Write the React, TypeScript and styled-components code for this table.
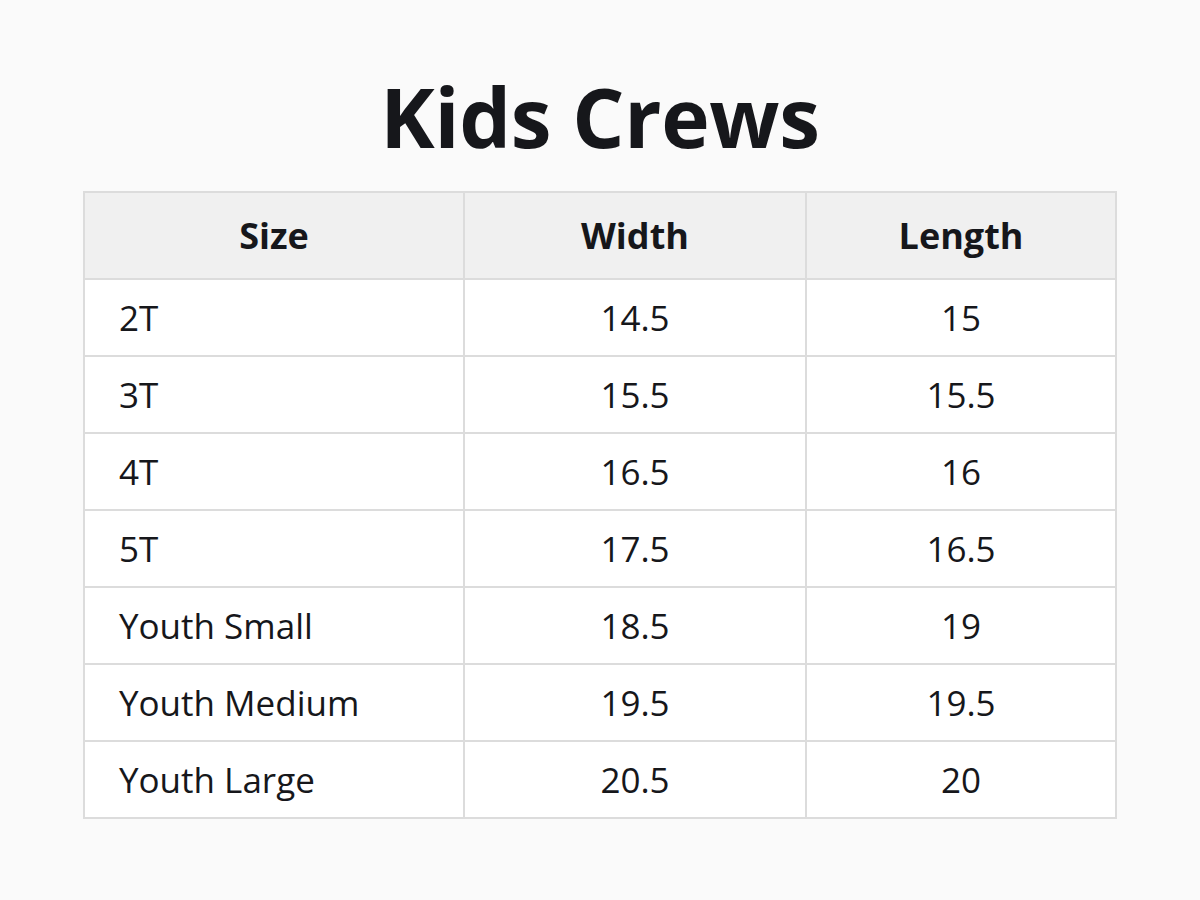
import React from 'react';
import styled, { createGlobalStyle } from 'styled-components';

const GlobalStyle = createGlobalStyle`
  body {
    margin: 0;
    background: #fafafa;
    font-family: 'Open Sans', 'Noto Sans', sans-serif;
    color: #16171b;
  }
`;

const Page = styled.div`
  width: 1200px;
  height: 900px;
  display: flex;
  flex-direction: column;
  align-items: center;
`;

const Title = styled.h1`
  margin: 72px 0 0;
  height: 119px;
  font-size: 82px;
  line-height: 88px;
  font-weight: 700;
  letter-spacing: -0.3px;
  color: #16171b;
`;

const Table = styled.table`
  width: 1032px;
  border-collapse: collapse;
  table-layout: fixed;
  background: #ffffff;
`;

const HeadCell = styled.th`
  height: 85px;
  padding: 0;
  background: #f0f0f0;
  border: 2px solid #dcdcdc;
  font-size: 36px;
  font-weight: 700;
  text-align: center;
`;

type CellProps = { $first?: boolean };

const Cell = styled.td<CellProps>`
  height: 75px;
  padding: 0 0 0 ${(p) => (p.$first ? '34px' : '0')};
  border: 2px solid #dcdcdc;
  font-size: 35px;
  font-weight: 400;
  text-align: ${(p) => (p.$first ? 'left' : 'center')};
`;

const rows = [
  ['2T', '14.5', '15'],
  ['3T', '15.5', '15.5'],
  ['4T', '16.5', '16'],
  ['5T', '17.5', '16.5'],
  ['Youth Small', '18.5', '19'],
  ['Youth Medium', '19.5', '19.5'],
  ['Youth Large', '20.5', '20'],
];

const App = (): JSX.Element => {
  return (
    <Page>
      <GlobalStyle />
      <Title>Kids Crews</Title>
      <Table>
        <colgroup>
          <col style={{ width: 380 }} />
          <col style={{ width: 342 }} />
          <col style={{ width: 310 }} />
        </colgroup>
        <thead>
          <tr>
            <HeadCell>Size</HeadCell>
            <HeadCell>Width</HeadCell>
            <HeadCell>Length</HeadCell>
          </tr>
        </thead>
        <tbody>
          {rows.map((r) => (
            <tr key={r[0]}>
              <Cell $first>{r[0]}</Cell>
              <Cell>{r[1]}</Cell>
              <Cell>{r[2]}</Cell>
            </tr>
          ))}
        </tbody>
      </Table>
    </Page>
  );
};

export default App;
